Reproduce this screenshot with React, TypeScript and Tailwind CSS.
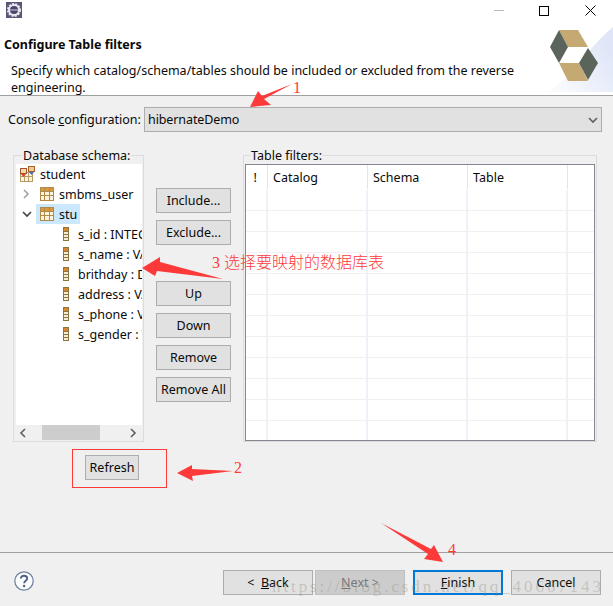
const columns = ['s_id : INTEGER', 's_name : VARCHAR', 'brithday : DATE', 'address : VARCHAR', 's_phone : VARCHAR', 's_gender : VARCHAR']

const TableIcon = () => (
  <svg width="14" height="14" viewBox="0 0 14 14" className="shrink-0">
    <rect x="0.5" y="0.5" width="13" height="13" fill="#fbf3dc" stroke="#b08a4a" />
    <rect x="1" y="1" width="12" height="3" fill="#d9973f" />
    <path d="M0.5 4.5H13.5M0.5 8.5H13.5M4.5 0.5V13.5M9.5 0.5V13.5" stroke="#b08a4a" fill="none" />
  </svg>
)

const ColumnIcon = () => (
  <svg width="6" height="14" viewBox="0 0 6 14" className="shrink-0">
    <rect x="0.5" y="0.5" width="5" height="13" fill="#f5efd8" stroke="#8a7440" />
    <rect x="1" y="1" width="4" height="3" fill="#d9862f" />
    <path d="M0.5 4.5H5.5M0.5 7.5H5.5M0.5 10.5H5.5" stroke="#8a7440" fill="none" />
  </svg>
)

const SchemaIcon = () => (
  <svg width="16" height="16" viewBox="0 0 16 16" className="shrink-0">
    <rect x="0.5" y="6.5" width="12" height="9" fill="#fbf3dc" stroke="#b59a66" />
    <path d="M0.5 10.5H12.5M4.5 6.5V15.5M8.5 6.5V15.5" stroke="#b59a66" fill="none" />
    <rect x="0.5" y="2.5" width="6" height="5" fill="#f3d9a8" stroke="#a5522f" />
    <path d="M1 8l2.5 3L6 8z" fill="#d8432f" />
    <rect x="8.5" y="0.5" width="6" height="5" fill="#f3c98a" stroke="#a5622f" />
    <path d="M9 6l2.5 3L14 6z" fill="#3f74c8" />
  </svg>
)

const Chevron = ({ dir, color }: { dir: 'right' | 'down' | 'left'; color: string }) => {
  const d = dir === 'right' ? 'M2 1l4 4-4 4' : dir === 'left' ? 'M6 1L2 5l4 4' : 'M1 3l4 4 4-4'
  return (
    <svg width="10" height="10" viewBox="0 0 10 10" className="shrink-0">
      <path d={d} fill="none" stroke={color} strokeWidth="1.6" />
    </svg>
  )
}

const Logo = () => (
  <svg width="73" height="67" viewBox="0 0 73 67" className="block">
    <defs>
      <linearGradient id="logoBg" x1="0" y1="1" x2="1" y2="0.4">
        <stop offset="0" stopColor="#ffffff" />
        <stop offset="1" stopColor="#dfe6f7" />
      </linearGradient>
    </defs>
    <path d="M0 67C25 66 40 30 73 2V67Z" fill="url(#logoBg)" />
    <path d="M19 5H38L48 22H28Z" fill="#c4a973" />
    <path d="M19 5L10 22 19 38 28 22Z" fill="#5b645a" />
    <path d="M19 38H39L48 56H28Z" fill="#c4a973" />
    <path d="M48 23L58 38 48 55 39 38Z" fill="#5b645a" />
  </svg>
)

const Btn = ({ children, className = 'border border-[#adadad] bg-[#e1e1e1] text-[#0a0a0a]' }: { children: React.ReactNode; className?: string }) => (
  <div className={`flex h-[25px] items-center justify-center ${className}`}>
    {children}
  </div>
)

export default function App() {
  return (
    <div
      className="relative flex h-[606px] w-[613px] flex-col overflow-hidden bg-[#f0f0f0] text-[12.5px] leading-[17px] text-[#0a0a0a]"
      style={{ fontFamily: '"Noto Sans", sans-serif' }}
    >
      {/* header */}
      <div className="relative h-[96px] border-b border-[#a0a0a0] bg-white">
        <div className="flex h-[21px] items-start justify-between pt-[2px] pl-[6px]">
          <svg width="16" height="16" viewBox="0 0 16 16">
            <rect width="16" height="16" fill="#5d5578" />
            <circle cx="8" cy="8" r="6" fill="#e8e6ec" stroke="#e8e6ec" strokeWidth="2" strokeDasharray="2 1.2" />
            <circle cx="8" cy="8" r="4" fill="#4b4468" />
            <rect x="4" y="7" width="8" height="2" fill="#8d86a8" />
          </svg>
          <div className="flex items-center pt-[3px]">
            <div className="mr-[35px] h-px w-[10px] bg-[#b9b9b9]" />
            <div className="mr-[36px] h-[10px] w-[10px] border border-black" />
            <svg width="11" height="11" viewBox="0 0 11 11" className="mr-[17px]">
              <path d="M0.5 0.5L10.5 10.5M10.5 0.5L0.5 10.5" stroke="#000" fill="none" />
            </svg>
          </div>
        </div>
        <div className="pt-[15px] pl-[4px] text-[12.5px] leading-[17px] font-bold">Configure Table filters</div>
        <div className="w-[530px] pt-[9px] pl-[11px]">
          Specify which catalog/schema/tables should be included or excluded from the reverse engineering.
        </div>
        <div className="absolute top-[25px] right-0">
          <Logo />
        </div>
      </div>

      {/* console configuration */}
      <div className="flex items-center pt-[11px] pr-[11px] pl-[8px]">
        <span className="w-[136px]">
          Console <u>c</u>onfiguration:
        </span>
        <div className="flex h-[25px] flex-1 items-center justify-between border border-[#adadad] bg-[#e1e1e1] pr-[3px] pl-[3px]">
          <span className="tracking-[-0.1px]">hibernateDemo</span>
          <Chevron dir="down" color="#606060" />
        </div>
      </div>

      {/* schema + buttons + filters */}
      <div className="flex pt-[23px] pl-[13px]">
        <div className="relative h-[287px] w-[131px] border border-[#dcdcdc] pt-[8px] pr-px pl-[2px]">
          <span className="absolute -top-[9px] left-[8px] bg-[#f0f0f0] px-px">Database schema:</span>
          <div className="flex h-[261px] flex-col overflow-hidden bg-white">
            <div className="flex h-[20px] items-center gap-[4px] pl-[4px]">
              <SchemaIcon />
              <span>student</span>
            </div>
            <div className="flex h-[20px] items-center pl-[6px]">
              <Chevron dir="right" color="#a0a0a0" />
              <span className="ml-[8px]">
                <TableIcon />
              </span>
              <span className="ml-[5px] whitespace-nowrap">smbms_user</span>
            </div>
            <div className="flex h-[20px] items-center pl-[6px]">
              <Chevron dir="down" color="#404040" />
              <div className="ml-[4px] flex h-[20px] w-[44px] items-center bg-[#cce8ff] pl-[4px]">
                <TableIcon />
                <span className="ml-[5px]">stu</span>
              </div>
            </div>
            {columns.map((c) => (
              <div key={c} className="flex h-[20px] items-center pl-[47px] whitespace-nowrap">
                <ColumnIcon />
                <span className="ml-[9px]">{c}</span>
              </div>
            ))}
          </div>
          <div className="flex h-[15px] items-center pr-[3px] pl-[3px]">
            <Chevron dir="left" color="#606060" />
            <div className="ml-[13px] h-[15px] w-[58px] bg-[#cdcdcd]" />
            <span className="ml-auto">
              <Chevron dir="right" color="#606060" />
            </span>
          </div>
        </div>

        <div className="ml-[12px] flex w-[75px] flex-col gap-[7px] pt-[33px]">
          <Btn>Include...</Btn>
          <div className="mb-[29px]">
            <Btn>Exclude...</Btn>
          </div>
          <Btn>Up</Btn>
          <Btn>Down</Btn>
          <Btn>Remove</Btn>
          <Btn>Remove All</Btn>
        </div>

        <div className="relative ml-[12px] h-[287px] w-[354px] border border-[#dcdcdc] px-[1px] pt-[8px]">
          <span className="absolute -top-[9px] left-[6px] bg-[#f0f0f0] px-px">Table filters:</span>
          <div className="h-[277px] overflow-hidden border border-[#828790] bg-white">
            <div className="flex h-[25px] items-center border-b border-white">
              <span className="flex h-full w-[22px] items-center border-r border-[#e5e5e5] pl-[7.4px] text-black">!</span>
              <span className="flex h-full w-[100px] items-center border-r border-[#e5e5e5] pl-[5px]">Catalog</span>
              <span className="flex h-full w-[100px] items-center border-r border-[#e5e5e5] pl-[5px]">Schema</span>
              <span className="flex h-full w-[100px] items-center border-r border-[#e5e5e5] pl-[5px]">Table</span>
            </div>
            {Array.from({ length: 12 }).map((_, i) => (
              <div key={i} className="flex h-[21px] border-b border-[#f0f0f0]">
                <span className="h-full w-[22px] border-r-2 border-[#edf2f9]" />
                <span className="h-full w-[100px] border-r-2 border-[#edf2f9]" />
                <span className="h-full w-[100px] border-r-2 border-[#edf2f9]" />
                <span className="h-full w-[100px] border-r-2 border-[#edf2f9]" />
              </div>
            ))}
          </div>
        </div>
      </div>

      {/* refresh */}
      <div className="w-[139px] pt-[13px] pl-[85px]">
        <Btn>Refresh</Btn>
      </div>

      {/* footer */}
      <div className="mt-auto flex h-[54px] items-start border-t border-[#a0a0a0] pt-[17px] pr-[12px] pl-[14px]">
        <svg width="20" height="20" viewBox="0 0 20 20" className="mt-px">
          <circle cx="10" cy="10" r="9.2" fill="#fbfcfe" stroke="#6d7f9f" strokeWidth="1.2" />
          <path d="M6.8 7.6C6.8 5.8 8.2 4.8 10 4.8c1.9 0 3.2 1 3.2 2.6 0 2.4-3 2.4-3 4.8" fill="none" stroke="#4e5f85" strokeWidth="1.9" />
          <circle cx="10.1" cy="15" r="1.2" fill="#4e5f85" />
        </svg>
        <div className="ml-auto flex">
          <div className="w-[90px]">
            <Btn>
              <span className="whitespace-pre">
                &lt;  <u>B</u>ack
              </span>
            </Btn>
          </div>
          <div className="ml-[2px] w-[90px]">
            <Btn className="border border-[#bfbfbf] bg-[#cccccc] text-[#787878]">
              <span>
                <u>N</u>ext &gt;
              </span>
            </Btn>
          </div>
          <div className="ml-[8px] w-[90px]">
            <Btn className="border-2 border-[#0078d7] bg-[#e1e1e1] text-[#0a0a0a]">
              <span>
                <u>F</u>inish
              </span>
            </Btn>
          </div>
          <div className="ml-[8px] w-[90px]">
            <Btn>Cancel</Btn>
          </div>
        </div>
      </div>

      {/* screenshot annotations */}
      <svg width="613" height="606" className="pointer-events-none absolute top-0 left-0">
        <path d="M292 84L264 99 271 105 250 107 258 91 262 96Z" fill="#fd3a3a" />
        <path d="M223 279L160 262 160 257 142 268 155 276 157 271Z" fill="#fd3a3a" />
        <path d="M233 471L192 469 192 465 177 473 193 481 192 476Z" fill="#fd3a3a" />
        <path d="M381 523L428 554 424 559 443 562 434 545 431 549Z" fill="#fd3a3a" />
        <rect x="72.5" y="449.5" width="94" height="38" fill="none" stroke="#fd3a3a" />
      </svg>
      <span className="absolute top-[79px] left-[293px] text-[16px] leading-[18px] text-[#fd3a3a]" style={{ fontFamily: '"Liberation Serif", serif' }}>1</span>
      <span className="absolute top-[459px] left-[234px] text-[16px] leading-[18px] text-[#fd3a3a]" style={{ fontFamily: '"Liberation Serif", serif' }}>2</span>
      <span className="absolute top-[541px] left-[448px] text-[16px] leading-[18px] text-[#fd3a3a]" style={{ fontFamily: '"Liberation Serif", serif' }}>4</span>
      <span className="absolute top-[254px] left-[212px] text-[16px] leading-[18px] font-light whitespace-nowrap text-[#fd3a3a]" style={{ fontFamily: '"Liberation Serif", "Noto Sans CJK SC", serif' }}>3 选择要映射的数据库表</span>
      <span className="absolute top-[578px] left-[272px] text-[17px] leading-[18px] tracking-[2.9px] whitespace-nowrap text-[#8a8a7a]/35" style={{ fontFamily: '"Liberation Serif", serif' }}>https://blog.csdn.net/qq_40667143</span>
    </div>
  )
}
